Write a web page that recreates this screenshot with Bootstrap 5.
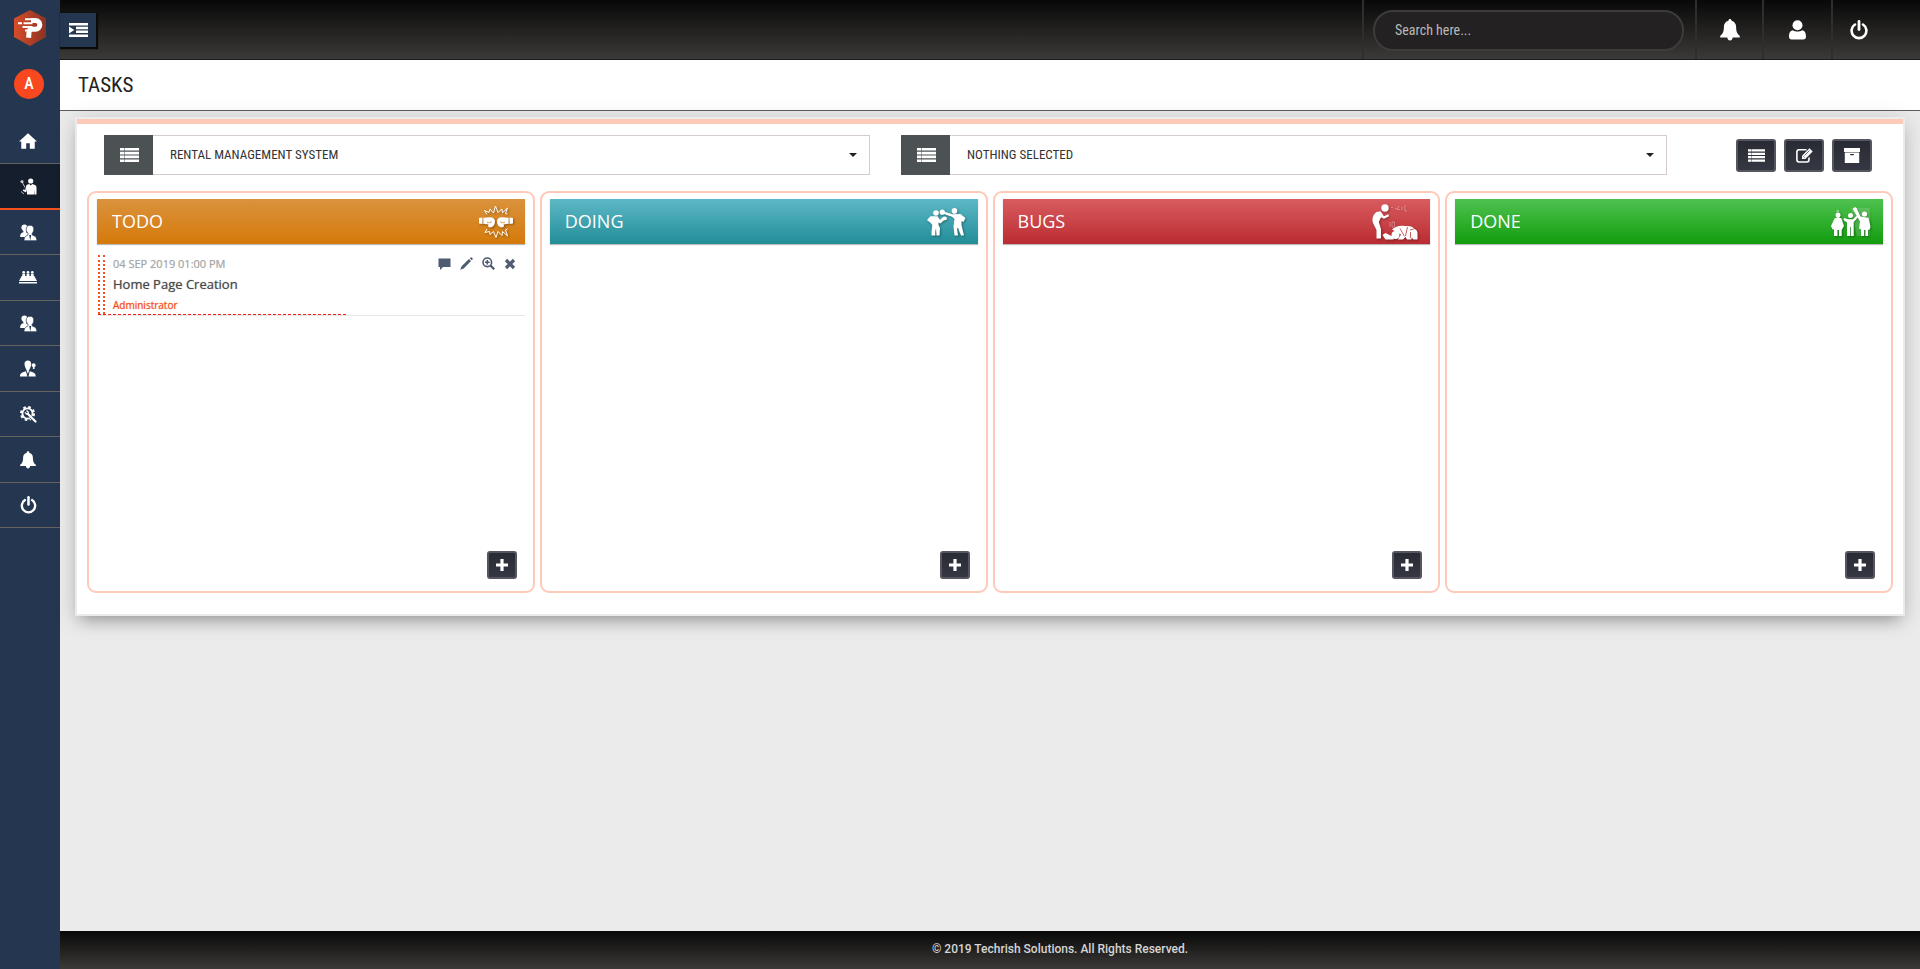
<!DOCTYPE html>
<html lang="en">
<head>
<meta charset="utf-8">
<meta name="viewport" content="width=device-width, initial-scale=1">
<title>Tasks</title>
<link href="https://cdn.jsdelivr.net/npm/bootstrap@5.3.0/dist/css/bootstrap.min.css" rel="stylesheet">
<style>
body { font-family: "Open Sans", sans-serif; background: #ebebeb; color: #222; }
svg { display: block; fill: currentColor; }
.font-cond { font-family: "Roboto Condensed", Roboto, sans-serif; }
.dark-bar { background: linear-gradient(#080808, #3c3a38); }

.side { width: 60px; background: #253750; }
.side .brand { height: 60px; padding-left: 14px; padding-top: 10px; }
.side .avatar { width: 30px; height: 30px; margin: 9px 0 20px 14px; background: #f9481f; font-size: 16px; font-weight: 500; }
.side li { height: 46px; border-bottom: 1px solid #66625f; }
.side li:nth-child(odd) { height: 45px; }
.side li a { color: #fff; height: 100%; padding-right: 4px; }
.side li.current { background: #151e2c; border-bottom: 2px solid #f4511e; }

.topbar { height: 60px; border-bottom: 1px solid #1c1a1a; }
.btn-toggle { width: 36px; height: 34px; background: #253750; color: #fff; border-radius: 0; box-shadow: 1px 1px 1px 1px #0a0a0a; }
.btn-toggle:hover { background: #2f4463; color: #fff; }
.top-cell { border-left: 2px solid #2f2d2d; color: #fff; }
.top-cell.w-bell { width: 67px; }
.top-cell.w-user { width: 69px; }
.top-cell.w-exit { width: 89px; padding-left: 17px; }
.search-cell { padding: 10px 11px 9px 9px; }
.search-box { width: 311px; height: 41px; padding: 0 20px 2px; border: 2px solid #3e3b3c; border-radius: 20px; background: #242122; color: #ccc; font-size: 14px; }
.search-box:focus { background: #242122; color: #fff; border-color: #666; box-shadow: none; }
.search-box::placeholder { color: #b9b9b9; }

.page-title { height: 51px; padding: 0 18px; border-bottom: 1px solid #5f5d5d; background: #fff; }
.page-title h1 { font-size: 21px; line-height: 50px; }

.board { margin: 6px 15px; border: 2px solid #ebebeb; background: #fff; box-shadow: 0 10px 14px -7px rgba(0,0,0,.25), 0 4px 20px rgba(0,0,0,.18); }
.board-inner { border-top: 5px solid #ffc9b9; padding: 11px 10px 21px; }
.filters { padding: 0 21px 16px 17px; gap: 31px; }
.filters .input-group { flex: 1 1 0; width: auto; }
.filters .input-group-text { width: 50px; background: #4c5154; color: #fff; border: 0; border-radius: 0; }
.filters .form-select { height: 40px; padding: 0 30px 0 17px; border: 1px solid #d3cbcc; border-left: 0; border-radius: 0; font-size: 13px; color: #333;
  background-image: url("data:image/svg+xml,%3Csvg xmlns='http://www.w3.org/2000/svg' viewBox='0 0 8 4'%3E%3Cpath fill='%23222' d='M0 0h8L4 4z'/%3E%3C/svg%3E"); background-size: 8px 4px; background-position: right 12px center; }
.filter-actions { margin-left: 38px; gap: 8px; }
.btn-ink { --bs-btn-color: #fff; --bs-btn-hover-color: #fff; --bs-btn-padding-x: 0; --bs-btn-padding-y: 0; background: linear-gradient(#292b34, #353842); border: 2px solid #55565f; border-radius: 3px; display: flex; align-items: center; justify-content: center; }
.btn-ink:hover { background: #414450; border-color: #55565f; }
.btn-ink.wide { width: 40px; height: 33px; }
.btn-ink.plus { width: 30px; height: 28px; margin: 0 8px 6px auto; }

.lanes { display: grid; grid-template-columns: repeat(4, 1fr); gap: 5px; }
.lane { min-height: 402px; border: 2px solid #ffc9b9; border-radius: 9px; padding: 6px 8px; }
.lane-head { height: 45px; padding: 0 12px 0 15px; color: #fff; box-shadow: 0 1px 1px #bbb; }
.lane-head h2 { font-size: 18px; }
.lane-head svg { filter: drop-shadow(1px 1px 1px rgba(0,0,0,.35)); }
.lane-todo { background: linear-gradient(#da923d, #d57a0a); }
.lane-doing { background: linear-gradient(#5eb8c6, #228d98); }
.lane-bugs { background: linear-gradient(#d95c5f, #ba2c31); }
.lane-done { background: linear-gradient(#4fc250, #129d0e); }

.task { margin: 11px 0 0 1px; border-bottom: 1px solid #e8e8e8; }
.task-grip { width: 7px; border: 2px dotted #f4511e; border-width: 0 2px; }
.task-body { padding-left: 8px; }
.task-top { height: 17px; }
.task-date { font-size: 11px; line-height: 17px; color: #a5a5a5; text-shadow: 0 0 1px #ccc; }
.task-name { font-size: 13px; line-height: 25px; color: #4a4a4a; text-shadow: 0 0 1px #888; }
.task-owner { font-size: 10px; line-height: 17px; color: #f4511e; text-shadow: 0 0 1px #f77a5a; }
.task-tools { gap: 9px; padding-right: 9px; }
.task-tools .btn { --bs-btn-color: #4f5b70; --bs-btn-hover-color: #f4511e; }
.task-bar { height: 0; border-top: 1px dashed #ff1a1a; }

.foot { height: 38px; font: 500 12px Roboto, sans-serif; color: #d5d5d5; padding-left: 140px; padding-bottom: 2px; }
</style>
</head>
<body>
<svg width="0" height="0" class="position-absolute" aria-hidden="true">
  <symbol id="i-list" viewBox="0 0 19 14"><path d="M0 0h4v2.6H0zM4.500 0H19v2.6H4.500zM0 3.8h4v2.6H0zM4.500 3.800H19v2.6H4.500zM0 7.6h4v2.6H0zM4.500 7.600H19v2.6H4.500zM0 11.4h4V14H0zM4.500 11.400H19V14H4.500z"/></symbol>
  <symbol id="i-bell" viewBox="0 0 20 22"><path d="M10 0c.9 0 1.5.6 1.5 1.5v.3c3 .7 4.6 3 4.6 6 0 5.5 1.6 7.600 3.700 9.200v1.600H12.700C12.400 20.500 11.500 21.500 10 21.500S7.600 20.500 7.300 18.600H.2V17C2.300 15.400 3.900 13.300 3.900 7.800c0-3 1.600-5.300 4.600-6v-.3C8.500.6 9.100 0 10 0z"/></symbol>
  <symbol id="i-power" viewBox="0 0 18 20"><path d="M5 4.500A7.400 7.400 0 1 0 13 4.500" fill="none" stroke="currentColor" stroke-width="2.600" stroke-linecap="round"/><path d="M9 1.500v8" stroke="currentColor" stroke-width="2.800" stroke-linecap="round"/></symbol>
  <symbol id="i-group" viewBox="0 0 17 17"><path d="M4.500.5c2 0 3.200 1.300 3.200 3.200 0 1.600-.7 3-1.600 3.900 0 1 .3 1.300 2.600 2.200V13H.2c0-3.400 1-4 3.200-4.800.2-.8 0-1-.5-1.800C2 5.500 1.400 4.800 1.400 3.400 1.400 1.600 2.600.5 4.500.5z"/><path stroke="#253750" stroke-width=".7" d="M10 1.300c2.400 0 3.800 1.500 3.800 3.700 0 1.900-.7 3.300-1.700 4.400v1.400c2.600 1.300 4.600 1.700 4.800 5.900H4c.2-4 1.800-4.600 4-5.900V9.400C7 8.300 6.200 6.900 6.200 5c0-2.200 1.400-3.700 3.800-3.700z"/><path d="M10.200 16.500l-1-5.500h2z" fill="#253750"/></symbol>
  <symbol id="i-plus" viewBox="0 0 12 12"><path d="M4.400 0h3.200v4.400H12v3.200H7.600V12H4.400V7.600H0V4.400h4.400z"/></symbol>
</svg>

<div class="d-flex min-vh-100">
  <aside class="side flex-shrink-0">
    <div class="brand">
      <svg width="32" height="36" viewBox="0 0 32 36"><defs><linearGradient id="hexa" x1="0" x2="1"><stop offset="0" stop-color="#d84d2b"/><stop offset="1" stop-color="#8a3322"/></linearGradient></defs><path fill="url(#hexa)" d="M16 0l16 8.500v18.500L16 36 0 27V8.500z"/><g fill="none" stroke="#fff"><path stroke-width="5" d="M17 10.500h4.500a4.200 4.200 0 0 1 0 8.700H18q-2.700 0-3 3l-.4 5.500"/><path stroke-width="2" d="M11 9.200h8M4 13.200h4M9.500 13.200h9M8.500 17h10M11 20.500h7"/></g></svg>
    </div>
    <div class="avatar rounded-circle text-white font-cond d-flex align-items-center justify-content-center">A</div>
    <ul class="list-unstyled mb-0">
      <li><a href="#" aria-label="Home" class="d-flex align-items-center justify-content-center"><svg width="18" height="16" viewBox="2 3 20 17"><path d="M10 20v-6h4v6h5.500v-8H22L12 3 2 12h2.500v8z"/></svg></a></li>
      <li class="current"><a href="#" aria-label="Tasks" class="d-flex align-items-center justify-content-center"><svg width="17" height="17" viewBox="0 0 17 17"><circle cx="10.700" cy="3" r="2.600"/><path d="M6.500 7l2.700-1 1.500 1.500L12.200 6l2.800 1c1 .4 1.500 1.400 1.500 2.400V16.500h-1.800v-5.500l-.4 5.500H7V11l-.8 3.500-3.400-1.800.8-1.500 1.600.8z"/><path d="M1.800 3.500l3.200 6" stroke="currentColor" stroke-width=".9" opacity=".8"/><circle cx="2" cy="3.500" r="1.600" opacity=".7"/><path d="M1 13.500l3 2.500" stroke="currentColor" opacity=".7"/></svg></a></li>
      <li><a href="#" aria-label="Clients" class="d-flex align-items-center justify-content-center"><svg width="17" height="17"><use href="#i-group"/></svg></a></li>
      <li><a href="#" aria-label="Meetings" class="d-flex align-items-center justify-content-center"><svg width="18" height="13" viewBox="0 0 18 13"><circle cx="4.700" cy="1.400" r="1.400"/><circle cx="9" cy="1.400" r="1.400"/><circle cx="13.300" cy="1.400" r="1.400"/><path d="M3.300 3h2.800v2H3.300zM7.600 3h2.800v2H7.600zM11.900 3h2.800v2h-2.800zM2.700 5h12.600L18 10H0zM0 11h18v1.500H0z"/></svg></a></li>
      <li><a href="#" aria-label="Teams" class="d-flex align-items-center justify-content-center"><svg width="17" height="17"><use href="#i-group"/></svg></a></li>
      <li><a href="#" aria-label="Staff" class="d-flex align-items-center justify-content-center"><svg width="16" height="17" viewBox="0 0 16 17"><path d="M7.800.5c2.100 0 3.400 1.400 3.400 3.500 0 2.600-1.300 4.400-2 6L7.900 14 6.500 10c-.7-1.600-2-3.400-2-6C4.500 1.900 5.700.5 7.800.5z"/><path d="M6 11.300l1.300 5.200H0c.1-3 1-3.600 6-5.200zM9.700 11.300L8.500 16.500h7.200c-.1-3-1-3.600-6-5.200z"/><circle cx="13.700" cy="5.200" r="1.900"/><path d="M12.900 6h1.600v3h-1.600z"/></svg></a></li>
      <li><a href="#" aria-label="Settings" class="d-flex align-items-center justify-content-center"><svg width="17" height="17" viewBox="0 0 17 17"><circle cx="7.500" cy="7.500" r="6.500" fill="none" stroke="currentColor" stroke-width="2" stroke-dasharray="2.600 2.500"/><circle cx="7.500" cy="7.500" r="5.100" fill="none" stroke="currentColor" stroke-width="1.900"/><path d="M6.500 4.500l1.800 1.800-.3 1.500-1.500.2-1.600-1.600" fill="none" stroke="currentColor" stroke-width="1.300"/><path d="M10.500 10.500l5 5" stroke="#253750" stroke-width="3.400"/><path d="M8 8l7.500 7.500" stroke="currentColor" stroke-width="2.200" stroke-linecap="round"/></svg></a></li>
      <li><a href="#" aria-label="Notifications" class="d-flex align-items-center justify-content-center"><svg width="16" height="18"><use href="#i-bell"/></svg></a></li>
      <li><a href="#" aria-label="Log out" class="d-flex align-items-center justify-content-center"><svg width="17" height="18"><use href="#i-power"/></svg></a></li>
    </ul>
  </aside>

  <div class="d-flex flex-column flex-grow-1">
    <header class="topbar dark-bar d-flex align-items-stretch">
      <button type="button" class="btn btn-toggle p-0 d-flex align-items-center justify-content-center align-self-center me-auto" aria-label="Toggle menu"><svg width="19" height="14" viewBox="0 0 19 14"><path d="M0 0h19v2.500H0zM7 3.800h12v2.500H7zM7 7.600h12v2.500H7zM0 11.400h19V14H0zM0 3.400L5.300 7 0 10.600z"/></svg></button>
      <form class="top-cell search-cell" role="search"><input type="search" class="form-control search-box font-cond" placeholder="Search here..." aria-label="Search"></form>
      <a href="#" class="top-cell w-bell d-flex align-items-center justify-content-center" aria-label="Notifications"><svg width="20" height="22"><use href="#i-bell"/></svg></a>
      <a href="#" class="top-cell w-user d-flex align-items-center justify-content-center" aria-label="Profile"><svg width="17" height="20" viewBox="0 0 17 20"><circle cx="8.500" cy="5.300" r="5"/><path d="M4 10.200c1.300 1 2.800 1.300 4.500 1.300s3.200-.3 4.500-1.300c3 .3 4 3 4 6.300 0 2-1 3-2.700 3H2.700C1 19.500 0 18.500 0 16.500c0-3.300 1-6 4-6.300z"/></svg></a>
      <a href="#" class="top-cell w-exit d-flex align-items-center" aria-label="Log out"><svg width="18" height="20"><use href="#i-power"/></svg></a>
    </header>

    <div class="page-title"><h1 class="font-cond fw-normal mb-0">TASKS</h1></div>

    <main class="flex-grow-1">
      <section class="board"><div class="board-inner">
        <div class="filters d-flex align-items-start">
          <div class="input-group">
            <label class="input-group-text justify-content-center" for="project" aria-label="Project"><svg width="19" height="14"><use href="#i-list"/></svg></label>
            <select id="project" class="form-select font-cond"><option>RENTAL MANAGEMENT SYSTEM</option></select>
          </div>
          <div class="input-group">
            <label class="input-group-text justify-content-center" for="module" aria-label="Module"><svg width="19" height="14"><use href="#i-list"/></svg></label>
            <select id="module" class="form-select font-cond"><option>NOTHING SELECTED</option></select>
          </div>
          <div class="filter-actions d-flex align-self-center">
            <button type="button" class="btn btn-ink wide" aria-label="List"><svg width="17" height="13"><use href="#i-list"/></svg></button>
            <button type="button" class="btn btn-ink wide" aria-label="Edit"><svg width="17" height="15" viewBox="0 0 17 15"><path d="M10.500 1.800H3A2.200 2.200 0 0 0 .9 4v7.800A2.200 2.200 0 0 0 3 14h7.800a2.200 2.200 0 0 0 2.200-2.200V9.500" fill="none" stroke="currentColor" stroke-width="1.600"/><path d="M13.500.3L16.700 3.500 9.300 11H6V7.700z"/><path d="M7.300 8.200l1.500 1.500M8.500 7.500l5-5" stroke="#2f313a" stroke-width=".7"/></svg></button>
            <button type="button" class="btn btn-ink wide" aria-label="Archive"><svg width="16" height="15" viewBox="0 0 16 15"><path d="M0 0h16v4H0zM.8 4.500h14.400V15H.8z"/><path d="M6.600 6.600h2.800" stroke="#2f313a" stroke-width="1.100" stroke-linecap="round"/></svg></button>
          </div>
        </div>

        <div class="lanes">
          <section class="lane d-flex flex-column">
            <div class="lane-head lane-todo d-flex align-items-center justify-content-between"><h2 class="fw-normal mb-0">TODO</h2>
              <svg width="34" height="34" viewBox="0 0 34 34"><path id="glove" d="M0 13l3.500-.6v6.600L0 18.400zM4.300 12.800l6.700-.6c3-.2 5 1.600 5 4.300 0 3-1.600 5.300-3.700 5.800-1.600.4-3.300-.4-3.300-1.600 0-.7.600-1.100 1.500-1.100-1.600-.2-3.200-.7-6.200-.9z"/><use href="#glove" transform="matrix(-1 0 0 1 34 0)"/><path d="M8 17.500c1.800.3 3.800.2 5-1M26 17.500c-1.800.3-3.800.2-5-1" fill="none" stroke="#d58424" stroke-width=".8"/><path d="M8 9.500L5.500 5.500 10 7.500 11 4l3.500 4L16.500 1l2.500 6.500L23 4l.5 3.800L28.500 3 26.500 8.500l2 .5M8 24l-2 3.500 4.500-1L11 29.500l3.500-3 2.500 6L19 26.500l4 4 .5-4 5 4.500-2-6 2-1" fill="none" stroke="currentColor" stroke-width="1"/></svg></div>
            <article class="task">
              <div class="d-flex">
                <div class="task-grip flex-shrink-0"></div>
                <div class="task-body flex-grow-1">
                  <div class="task-top d-flex align-items-center justify-content-between">
                    <time class="task-date" datetime="2019-09-04T13:00">04 SEP 2019 01:00 PM</time>
                    <div class="task-tools d-flex align-items-center">
                      <button type="button" class="btn border-0 p-0" aria-label="Comment"><svg width="13" height="12" viewBox="0 0 13 12"><path d="M.5.5h12v8.500H5L2 12V9H.5z"/></svg></button>
                      <button type="button" class="btn border-0 p-0" aria-label="Edit task"><svg width="13" height="13" viewBox="0 0 13 13"><path d="M9 2l2 2-7.300 7.400L.2 12.800l1.400-3.500zM9.800 1.200L10.700.4c.7-.7 2.600 1.200 1.900 1.900l-.8.9z"/></svg></button>
                      <button type="button" class="btn border-0 p-0" aria-label="View task"><svg width="13" height="13" viewBox="0 0 13 13"><circle cx="5.300" cy="5.300" r="4.300" fill="none" stroke="currentColor" stroke-width="1.600"/><path d="M8.600 8.600l3.700 3.700" stroke="currentColor" stroke-width="2.200"/><path d="M5.300 3v4.600M3 5.300h4.600" stroke="currentColor" stroke-width="1.600"/></svg></button>
                      <button type="button" class="btn border-0 p-0" aria-label="Delete task"><svg width="12" height="12" viewBox="0 0 12 12"><path d="M2 2l8 8M10 2l-8 8" stroke="currentColor" stroke-width="3.200"/></svg></button>
                    </div>
                  </div>
                  <div class="task-name">Home Page Creation</div>
                  <div class="task-owner">Administrator</div>
                </div>
              </div>
              <div class="task-bar" style="width:58%"></div>
            </article>
            <div class="mt-auto"><button type="button" class="btn btn-ink plus" aria-label="Add to do"><svg width="12" height="12"><use href="#i-plus"/></svg></button></div>
          </section>

          <section class="lane d-flex flex-column">
            <div class="lane-head lane-doing d-flex align-items-center justify-content-between"><h2 class="fw-normal mb-0">DOING</h2>
              <svg width="40" height="28" viewBox="0 0 40 28"><circle cx="10" cy="5" r="2.800"/><circle cx="28.500" cy="2.900" r="2.800"/><path d="M4.500 8.300h7l2.500 3.500 2.500-2.300c1.800-1.700 4.500-.8 4.500 1 0 1.500-1.500 2-3 1.700L14.500 15.500l-2-1V17l1.500 3-.5 7.500h-3L10 20.500l-.7 3v4H5.500V24l.8-7-1.600-2L1 12z"/><circle cx="16.300" cy="4.200" r="2.600"/><path d="M17.500 3.500l9 2.800 8-.3 5 4-2 4-2-1v4l2.500 10.500h-3L32 20l-1 .5 1 7h-3.500l-1-9 1-7.500L26 8.700l-8-2.700z"/></svg></div>
            <div class="mt-auto"><button type="button" class="btn btn-ink plus" aria-label="Add to doing"><svg width="12" height="12"><use href="#i-plus"/></svg></button></div>
          </section>

          <section class="lane d-flex flex-column">
            <div class="lane-head lane-bugs d-flex align-items-center justify-content-between"><h2 class="fw-normal mb-0">BUGS</h2>
              <svg width="47" height="36" viewBox="0 0 47 36"><circle cx="14" cy="4" r="3.700"/><path d="M5.500 8l4-.8 3.500 5 4.300-2 .7 2-5 2.500-3-1.500L7.800 18l2.200 7v9.500H5.500V26L2 19C.3 14.500 2.500 10 5.500 8z"/><path d="M11.500 31l3-2 8 4v2.500h-8z"/><circle cx="24.500" cy="31" r="4"/><path d="M21 25.500c3-3 8-4.500 13-3.500 5-.5 8 .5 9.500 3 2.500 1 3 2.500 3 5v5.500h-4l-2-2v2H36l-1.500-2.500L32 35.500h-5l3-5z"/><path d="M29 24.500l4.500 8M36.500 23l-2 9M39 26l4-1M39.500 28v6" fill="none" stroke="#c03a3f" stroke-width=".8"/><g stroke="currentColor" fill="none" opacity=".4"><path d="M20 3.500h2M24 4.500h1.500M28 2l-2 3.500h3M31 6V3M34 1v6h2M19 18v5M21 18h2.500v5H21z" stroke-width=".8"/></g></svg></div>
            <div class="mt-auto"><button type="button" class="btn btn-ink plus" aria-label="Add bug"><svg width="12" height="12"><use href="#i-plus"/></svg></button></div>
          </section>

          <section class="lane d-flex flex-column">
            <div class="lane-head lane-done d-flex align-items-center justify-content-between"><h2 class="fw-normal mb-0">DONE</h2>
              <svg width="40" height="30" viewBox="0 0 40 30"><path fill="#fff" opacity=".15" d="M20 1h19v28H26z"/><circle cx="7" cy="8" r="2.500"/><path d="M3.500 11.500L7 10l3.500 1.500L13 19l-2 3.500h-.3V29H8v-6H6.500v6H3v-6.500H1.500L0 19z"/><circle cx="19.500" cy="8.500" r="2.500"/><path d="M13 11l4 1.200h5l4-3.700 1.200 1.500-4.500 5v14h-2.700v-9h-.7v9H16V15.500L12.500 13z"/><circle cx="33.500" cy="7" r="2.600"/><path d="M22 2.500c0-3 4-3 4-.5l3.500 7.500 4 .8 4 .4 2 9-1 3h-1.500V29h-2.500v-6H33v6h-3v-6.500l-2-1 1-7-5.500-9.500z"/><path d="M5.500 3h2.500v2H5.500z" opacity=".4"/></svg></div>
            <div class="mt-auto"><button type="button" class="btn btn-ink plus" aria-label="Add done"><svg width="12" height="12"><use href="#i-plus"/></svg></button></div>
          </section>
        </div>
      </div></section>
    </main>

    <footer class="foot dark-bar d-flex align-items-center justify-content-center">© 2019 Techrish Solutions. All Rights Reserved.</footer>
  </div>
</div>
<script src="https://cdn.jsdelivr.net/npm/bootstrap@5.3.0/dist/js/bootstrap.bundle.min.js"></script>
</body>
</html>
